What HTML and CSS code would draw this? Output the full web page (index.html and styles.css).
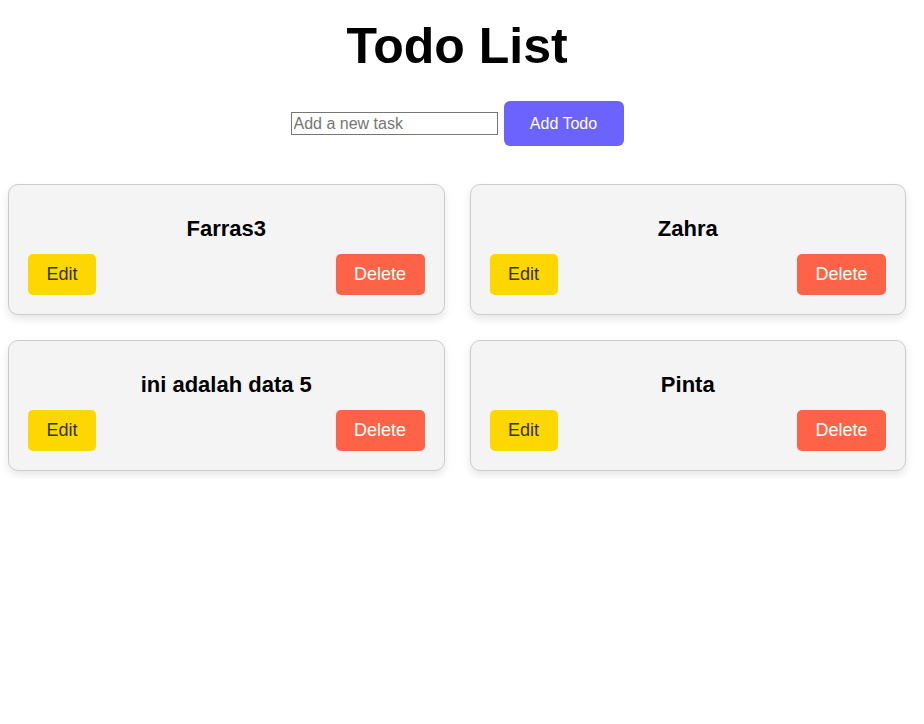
FILE: index.html
```html
<!DOCTYPE html>
<html>
<head>
<meta charset="utf-8">
<title>Todo List</title>
<link rel="stylesheet" href="styles.css">
</head>
<body>
<div class="app">
  <h1 class="title">Todo List</h1>
  <form class="add-form">
    <input class="task-input" type="text" placeholder="Add a new task">
    <button class="add-btn" type="button">Add Todo</button>
  </form>
  <div class="todo-grid">
    <div class="card">
      <h3 class="card-title">Farras3</h3>
      <div class="card-actions">
        <button class="btn btn-edit" type="button">Edit</button>
        <button class="btn btn-delete" type="button">Delete</button>
      </div>
    </div>
    <div class="card">
      <h3 class="card-title">Zahra</h3>
      <div class="card-actions">
        <button class="btn btn-edit" type="button">Edit</button>
        <button class="btn btn-delete" type="button">Delete</button>
      </div>
    </div>
    <div class="card">
      <h3 class="card-title">ini adalah data 5</h3>
      <div class="card-actions">
        <button class="btn btn-edit" type="button">Edit</button>
        <button class="btn btn-delete" type="button">Delete</button>
      </div>
    </div>
    <div class="card">
      <h3 class="card-title">Pinta</h3>
      <div class="card-actions">
        <button class="btn btn-edit" type="button">Edit</button>
        <button class="btn btn-delete" type="button">Delete</button>
      </div>
    </div>
  </div>
</div>
</body>
</html>
```

FILE: styles.css
```css
html, body {
  margin: 0;
  padding: 0;
  background: #ffffff;
}

body {
  padding: 8px;
  font-family: "Liberation Sans", Arial, sans-serif;
  color: #000;
}

.app {
  width: 898px;
}

.title {
  margin: 10px 0 26px;
  font-size: 50px;
  font-weight: bold;
  line-height: 57px;
  text-align: center;
}

.add-form {
  display: flex;
  justify-content: center;
  align-items: center;
  gap: 6px;
  margin: 0 0 38px;
}

.task-input {
  box-sizing: border-box;
  width: 207px;
  height: 23px;
  padding: 1px 2px;
  border: 1px solid #767676;
  font-family: "Liberation Sans", Arial, sans-serif;
  font-size: 16px;
  color: #000;
  background: #fff;
}

.task-input::placeholder {
  color: #757575;
}

.add-btn {
  box-sizing: border-box;
  width: 120px;
  height: 45px;
  padding: 0 24px;
  border: none;
  border-radius: 6px;
  background: #6c63ff;
  color: #fff;
  font-family: "Liberation Sans", Arial, sans-serif;
  font-size: 16px;
  cursor: pointer;
}

.todo-grid {
  display: grid;
  grid-template-columns: 1fr 1fr;
  column-gap: 25px;
  row-gap: 25px;
}

.card {
  box-sizing: border-box;
  height: 131px;
  padding: 19px 19px;
  border: 1px solid #cccccc;
  border-radius: 10px;
  background: #f4f4f4;
  box-shadow: 0 4px 8px rgba(0, 0, 0, 0.1);
}

.card-title {
  margin: 12px 0 13px;
  font-size: 22px;
  font-weight: bold;
  line-height: 25px;
  text-align: center;
}

.card-actions {
  display: flex;
  justify-content: space-between;
}

.btn {
  box-sizing: border-box;
  height: 41px;
  padding: 0 18px;
  border: none;
  border-radius: 5px;
  font-family: "Liberation Sans", Arial, sans-serif;
  font-size: 18px;
  cursor: pointer;
}

.btn-edit {
  width: 68px;
  background: #ffd700;
  color: #333333;
}

.btn-delete {
  width: 89px;
  background: #ff6347;
  color: #ffffff;
}
```
